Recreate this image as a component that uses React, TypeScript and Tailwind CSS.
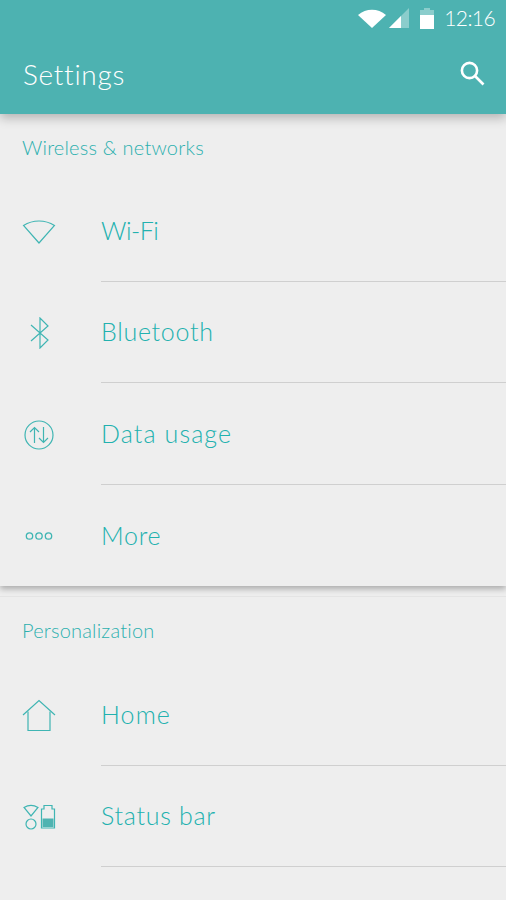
import React from "react";

const teal = "#3fb5b3";

const WifiIcon = () => (
  <svg width="34" height="28" viewBox="0 0 34 28" fill="none" stroke={teal} strokeWidth="1.2">
    <path d="M1.5 7.5 C11 1.5 23 1.5 32.5 7.5 L17 25 Z" strokeLinejoin="miter" />
  </svg>
);

const BluetoothIcon = () => (
  <svg width="34" height="32" viewBox="0 0 34 32" fill="none" stroke={teal} strokeWidth="1.2">
    <path d="M9 8 L26 23 L18 31 L18 1 L26 9 L9 24" />
  </svg>
);

const DataIcon = () => (
  <svg width="34" height="32" viewBox="0 0 34 32" fill="none" stroke={teal} strokeWidth="1.2">
    <circle cx="17" cy="16" r="14" />
    <path d="M12.5 24 V8.5 M8 13 L12.5 8.5 L17 13" />
    <path d="M21.5 8 V23.5 M17 19 L21.5 23.5 L26 19" />
  </svg>
);

const MoreIcon = () => (
  <svg width="34" height="12" viewBox="0 0 34 12" fill="none" stroke={teal} strokeWidth="1.3">
    <circle cx="7.5" cy="6" r="3.2" />
    <circle cx="17" cy="6" r="3.2" />
    <circle cx="26.5" cy="6" r="3.2" />
  </svg>
);

const HomeIcon = () => (
  <svg width="34" height="34" viewBox="0 0 34 34" fill="none" stroke={teal} strokeWidth="1.2">
    <path d="M1 16 L17 1.5 L33 16" />
    <path d="M6 12.5 V31.5 H28 V12.5" />
  </svg>
);

const StatusIcon = () => (
  <svg width="34" height="26" viewBox="0 0 34 26" fill="none" stroke={teal} strokeWidth="1.2">
    <path d="M2 3.5 C6.5 0.8 11.5 0.8 16 3.5 L9 12 Z" />
    <circle cx="9" cy="20" r="5" />
    <path d="M22 5 V1.5 H30 V5 H32.5 V24 H19.5 V5 Z" />
    <rect x="20.5" y="14.5" width="11" height="8.5" fill="#4fb3b1" stroke="none" />
  </svg>
);

const Row = ({
  icon,
  label,
  divider,
  labelClass,
}: {
  icon: React.ReactNode;
  label: string;
  divider?: boolean;
  labelClass?: string;
}) => (
  <div className="flex h-[101.5px]">
    <div className="flex w-[101px] shrink-0 items-center pl-[22px] pt-[2px]">{icon}</div>
    <div className={`flex flex-1 items-center text-[25px] text-[#22b1af] ${divider ? "border-b-[1.5px] border-[#cfcfcf]" : ""}`}>
      <span className={labelClass ?? "tracking-[0.7px]"}>{label}</span>
    </div>
  </div>
);

const SectionTitle = ({ children }: { children: React.ReactNode }) => (
  <div className="pl-[22px] text-[20px] leading-[26px] tracking-[0.2px] text-[#2cb0ae]">{children}</div>
);

export default function App() {
  return (
    <div
      className="h-[900px] w-[506px] overflow-hidden bg-[#eeeeee] font-light"
      style={{ fontFamily: "Lato, 'Open Sans', sans-serif" }}
    >
      <header className="relative z-10 h-[114px] bg-[#4db2b1] text-white shadow-[0_4px_10px_rgba(0,0,0,0.25)]">
        <div className="flex h-[34px] items-center justify-end pr-[11px] pt-[2px]">
          <svg width="28" height="19" viewBox="0 0 28 19" fill="white">
            <path d="M0 6 C8 -1 20 -1 28 6 L14 19 Z" />
          </svg>
          <svg className="ml-[3px]" width="20" height="20" viewBox="0 0 20 20">
            <path d="M0 20 L20 0 V20 Z" fill="white" fillOpacity="0.35" />
            <path d="M0 20 L12 8 V20 Z" fill="white" />
          </svg>
          <svg className="ml-[11px]" width="14" height="21" viewBox="0 0 14 21">
            <path d="M4 0 H10 V2 H14 V7 H0 V2 H4 Z" fill="white" fillOpacity="0.35" />
            <rect y="7" width="14" height="14" fill="white" />
          </svg>
          <span className="ml-[10px] text-[21px] tracking-[-0.6px]">12:16</span>
        </div>
        <div className="flex h-[80px] items-center justify-between pl-[23px] pr-[21px]">
          <h1 className="text-[28px] font-light tracking-[0.7px]">Settings</h1>
          <svg className="mb-[2px]" width="26" height="26" viewBox="0 0 26 26" fill="none" stroke="white" strokeWidth="2.6">
            <circle cx="10.5" cy="10.5" r="7.6" />
            <path d="M16 16 L24.5 24.5" />
          </svg>
        </div>
      </header>

      <section className="relative z-[5] bg-[#eeeeee] pt-[20px] shadow-[0_3px_6px_rgba(0,0,0,0.28)]">
        <div className="h-[46px]">
          <SectionTitle>Wireless &amp; networks</SectionTitle>
        </div>
        <Row icon={<WifiIcon />} label="Wi-Fi" divider labelClass="tracking-[-0.5px]" />
        <Row icon={<BluetoothIcon />} label="Bluetooth" divider />
        <Row icon={<DataIcon />} label="Data usage" divider labelClass="tracking-[1.1px]" />
        <Row icon={<MoreIcon />} label="More" />
      </section>

      <section className="mt-[10px] border-t border-[#e4e4e4] pt-[20px]">
        <div className="h-[47px]">
          <SectionTitle>Personalization</SectionTitle>
        </div>
        <Row icon={<HomeIcon />} label="Home" divider labelClass="tracking-[1.1px]" />
        <Row icon={<StatusIcon />} label="Status bar" divider />
      </section>
    </div>
  );
}
